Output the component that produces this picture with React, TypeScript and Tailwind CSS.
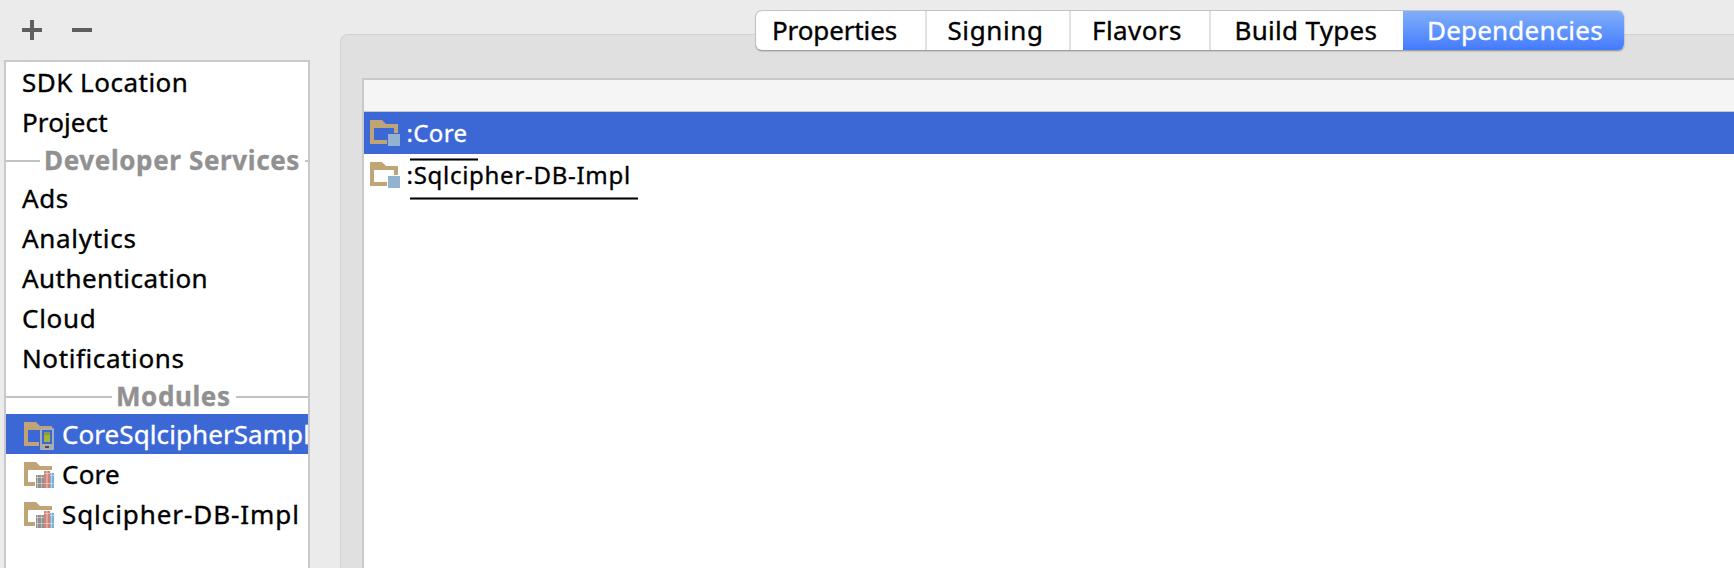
import React from "react";
import clsx from "clsx";

type Item = { label: string; tracking: string };

const generalItems: Item[] = [
  { label: "SDK Location", tracking: "tracking-[0.5px]" },
  { label: "Project", tracking: "tracking-[0.1px]" },
];

const serviceItems: Item[] = [
  { label: "Ads", tracking: "tracking-[0.6px]" },
  { label: "Analytics", tracking: "tracking-[0.7px]" },
  { label: "Authentication", tracking: "tracking-[0.44px]" },
  { label: "Cloud", tracking: "tracking-[0.7px]" },
  { label: "Notifications", tracking: "tracking-[0.6px]" },
];

const tabs = [
  { label: "Properties", box: "w-[171px] pl-[16px] border-r-2", tracking: "tracking-[-0.12px]" },
  { label: "Signing", box: "w-[144px] pl-[20.5px] border-r-2", tracking: "tracking-[0.6px]" },
  { label: "Flavors", box: "w-[140px] pl-[21px] border-r-2", tracking: "tracking-[0.42px]" },
  { label: "Build Types", box: "w-[192px] pl-[23.5px]", tracking: "tracking-[0.3px]" },
];

function Folder({ kind }: { kind: "phone" | "library" | "module" }) {
  return (
    <svg width="30" height="28" viewBox="0 0 30 28" className="shrink-0">
      {kind === "module" && (
        <>
          <path d="M0 0H12L16 4H28V13H24V8H4V20H17V24H0Z" fill="#c1a476" />
          <rect x="18" y="14" width="12" height="12" fill="#91b3cf" />
        </>
      )}
      {kind === "phone" && (
        <>
          <path d="M0 0H12L16 4H28V6H16V8H4V20H15V24H0Z" fill="#c1a476" />
          <rect x="16" y="6" width="14" height="22" rx="1" fill="#a9acb0" />
          <rect x="18" y="8" width="10" height="14" fill="#3b68d5" />
          <rect x="20" y="10" width="6" height="10" fill="#a3b436" />
          <rect x="20" y="10" width="6" height="3" fill="#8c9b3d" />
          <rect x="21" y="24" width="4" height="2" fill="#4b4b4b" />
        </>
      )}
      {kind === "library" && (
        <>
          <path d="M0 0H12L16 4H28V8H4V20H11V24H0Z" fill="#c1a476" />
          <path d="M12 13H20V26H12Z" fill="#8f8f8f" />
          <path d="M20 9H26V26H20Z" fill="#cf8479" />
          <path d="M26 11H30V26H26Z" fill="#7fadd3" />
          <path d="M13 13H14V26H13ZM17 13H18V26H17Z" fill="#b9b9b9" />
          <path d="M22 9H24V26H22Z" fill="#dfa59c" />
          <path d="M27 11H28V26H27Z" fill="#b4d2ea" />
          <path d="M12 15H20V16H12ZM12 21H20V22H12ZM20 11H26V12H20ZM20 21H26V22H20ZM26 13H30V14H26ZM26 21H30V22H26Z" fill="#fff" fillOpacity="0.4" />
        </>
      )}
    </svg>
  );
}

function NavItem({ label, tracking }: Item) {
  return <li className={clsx("h-10 pl-4 leading-10", tracking)}>{label}</li>;
}

function Separator({ label, left, tracking }: { label: string; left: string; tracking: string }) {
  return (
    <div className="flex h-[38px] items-center font-bold leading-9 text-[#919191] -mb-0.5">
      <span className={clsx("h-0.5 shrink-0 bg-[#c2c2c2]", left)} />
      <span className={clsx("-mt-0.5 shrink-0 pl-1 pr-[5px]", tracking)}>{label}</span>
      <span className="h-0.5 flex-1 bg-[#c2c2c2]" />
    </div>
  );
}

function ModuleItem({ label, tracking, kind, selected }: Item & { kind: "phone" | "library"; selected?: boolean }) {
  return (
    <li className={clsx("flex h-10 items-start overflow-hidden pl-[18px] leading-10", selected && "bg-[#3b68d5] text-white")}>
      <span className="pt-2">
        <Folder kind={kind} />
      </span>
      <span className={clsx("pl-2", tracking)}>{label}</span>
    </li>
  );
}

function DependencyRow({ label, tracking, selected }: Item & { selected?: boolean }) {
  return (
    <li className={clsx("flex h-[42px] pl-[6px] text-[24px] leading-[42px]", selected && "bg-[#3b68d5] text-white")}>
      <span className="pt-2">
        <Folder kind="module" />
      </span>
      <span className={clsx("pl-[6.5px]", tracking)}>{label}</span>
    </li>
  );
}

export default function App() {
  return (
    <div className="flex h-[568px] w-[1734px] overflow-hidden whitespace-nowrap bg-[#ebebeb] font-['Noto_Sans','Open_Sans',sans-serif] text-[26px] text-black [-webkit-text-stroke:0.35px]">
      <aside className="ml-1 flex w-[306px] shrink-0 flex-col">
        <div className="flex h-[60px] gap-[30px] pl-[18px] pt-5">
          <svg width="20" height="20" viewBox="0 0 20 20">
            <path d="M8 0H12V8H20V12H12V20H8V12H0V8H8Z" fill="#5e5e5e" />
          </svg>
          <svg width="20" height="20" viewBox="0 0 20 20">
            <path d="M0 8H20V12H0Z" fill="#5e5e5e" />
          </svg>
        </div>
        <nav className="flex-1 overflow-hidden border-2 border-b-0 border-[#c9c9c9] bg-white">
          <ul>
            {generalItems.map((item) => (
              <NavItem key={item.label} {...item} />
            ))}
          </ul>
          <Separator label="Developer Services" left="w-[34px]" tracking="tracking-[0.62px]" />
          <ul>
            {serviceItems.map((item) => (
              <NavItem key={item.label} {...item} />
            ))}
          </ul>
          <Separator label="Modules" left="w-[106px]" tracking="tracking-[0.6px]" />
          <ul>
            <ModuleItem label="CoreSqlcipherSample" tracking="tracking-[0.08px]" kind="phone" selected />
            <ModuleItem label="Core" tracking="tracking-[0.2px]" kind="library" />
            <ModuleItem label="Sqlcipher-DB-Impl" tracking="tracking-[0.93px]" kind="library" />
          </ul>
        </nav>
      </aside>

      <main className="ml-[30px] mt-[34px] flex flex-1 flex-col rounded-tl-[8px] border-l border-t border-[#d3d3d3] bg-[#e0e0e0] pl-[21px]">
        <div className="-mt-[25px] ml-[393px] flex h-[41px] w-[870px] shrink-0 overflow-hidden rounded-[7px] border border-b-[#a0a0a0] border-l-[#c0c0c0] border-r-transparent border-t-[#c4c4c4] bg-white bg-clip-padding leading-[38px] shadow-[0_1px_1px_rgba(0,0,0,0.12)]">
          {tabs.map((tab) => (
            <div key={tab.label} className={clsx("shrink-0 border-[#e2e2e2]", tab.box, tab.tracking)}>
              {tab.label}
            </div>
          ))}
          <div className="-my-px -mr-px flex-1 rounded-r-[7px] border-b border-[#3b6ef0] bg-linear-to-b from-[#83b0fa] to-[#447afd] pl-[24px] pt-px tracking-[0.2px] text-white">
            Dependencies
          </div>
        </div>
        <section className="relative mt-[27px] flex-1 border-l-2 border-t-2 border-[#c9c9c9] bg-white">
          <div className="h-8 border-b border-[#c9c9c9] bg-[#f5f5f5]" />
          <ul>
            <DependencyRow label=":Core" tracking="tracking-[0.36px]" selected />
            <DependencyRow label=":Sqlcipher-DB-Impl" tracking="tracking-[0.72px]" />
          </ul>
          <span className="absolute left-[46px] top-[78px] h-[3px] w-[68px] border-y border-[#777] bg-black" />
          <span className="absolute left-[46px] top-[117px] h-[3px] w-[228px] border-y border-[#777] bg-black" />
        </section>
      </main>
    </div>
  );
}
